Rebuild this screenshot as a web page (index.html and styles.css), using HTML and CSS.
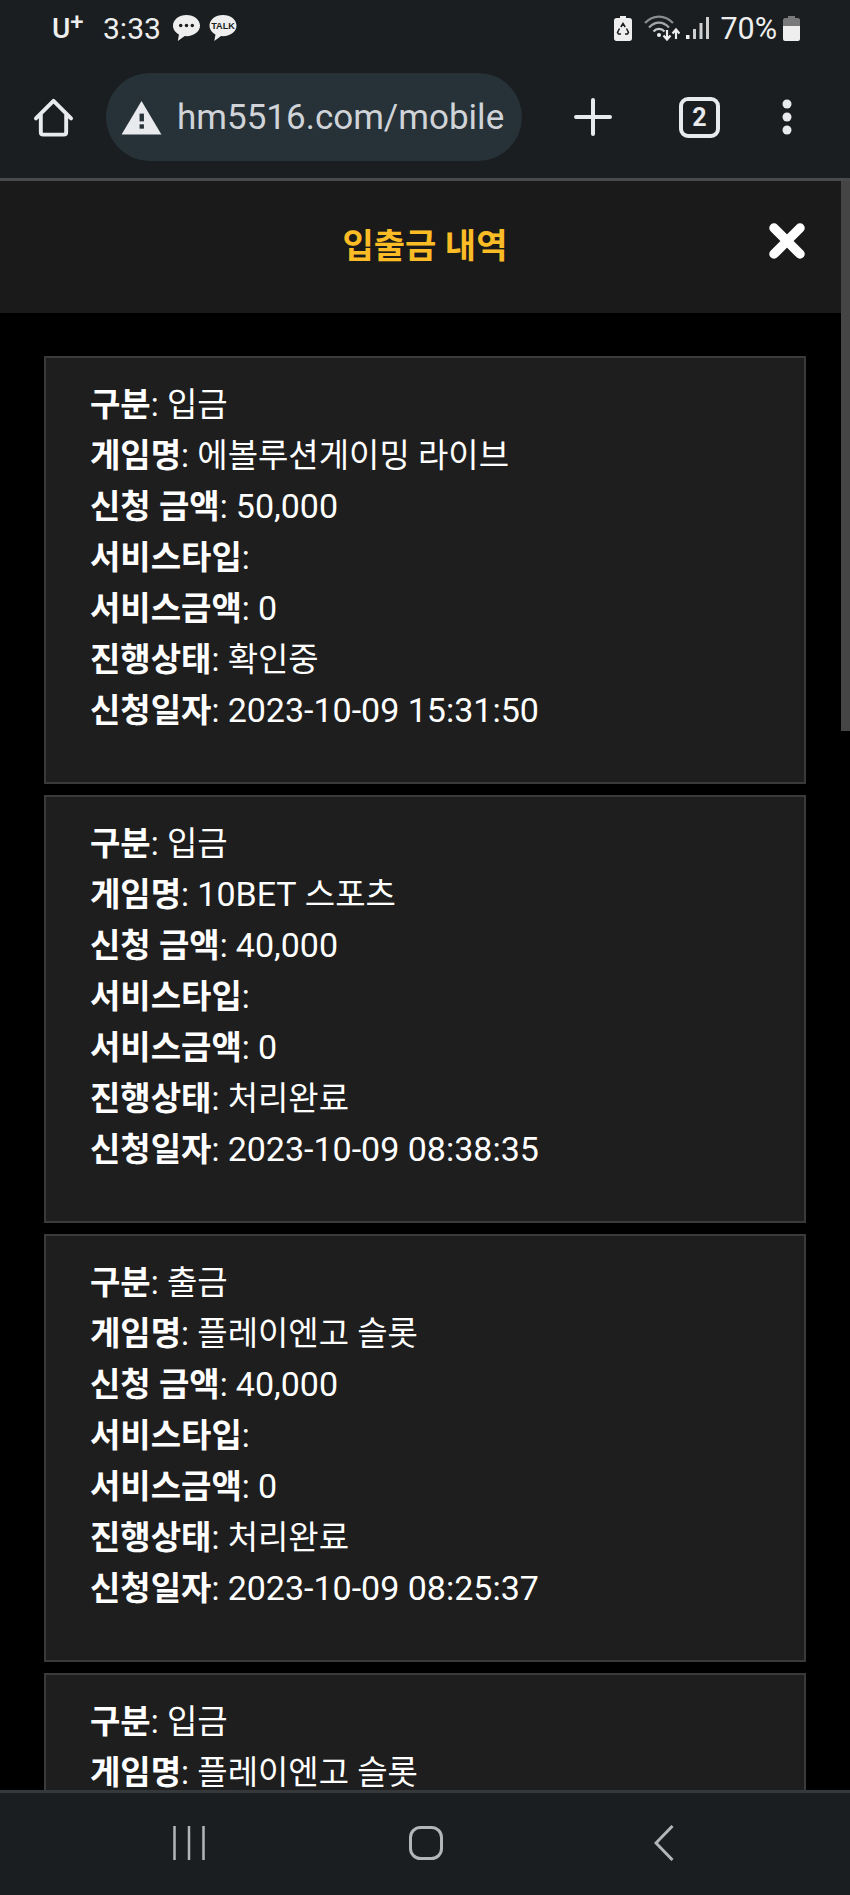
FILE: index.html
```html
<!DOCTYPE html>
<html lang="ko">
<head>
    <meta charset="UTF-8">
    <meta name="viewport" content="width=device-width, initial-scale=1.0">
    <title>입출금 내역</title>
    <link rel="stylesheet" href="styles.css">
</head>
<body>
    <header class="chrome">
        <div class="status">
            <div class="status-left">
                <span class="carrier">U<sup>+</sup></span>
                <span class="clock">3:33</span>
                <svg class="note" width="29" height="28" viewBox="0 0 30 29">
                    <path d="M15 1C7.300 1 1 5.900 1 12c0 4 2.400 7.300 6.200 9.200L6 28 13.200 22.900C13.800 23 14.400 23 15 23c7.700 0 14-4.900 14-11S22.700 1 15 1z" fill="#eeeeee"/>
                    <circle cx="9" cy="12" r="1.800" fill="#1a1e21"/>
                    <circle cx="15" cy="12" r="1.800" fill="#1a1e21"/>
                    <circle cx="21" cy="12" r="1.800" fill="#1a1e21"/>
                </svg>
                <svg class="note" width="30" height="28" viewBox="0 0 30 29">
                    <path d="M15 1C7 1 1 5.900 1 12c0 4 2.500 7.400 6.200 9.300L6 28 13 22.900C13.700 23 14.300 23 15 23c8 0 14-4.900 14-11S23 1 15 1z" fill="#eeeeee"/>
                    <text x="15" y="16" class="talk">TALK</text>
                </svg>
            </div>
            <div class="status-right">
                <svg width="18" height="25" viewBox="0 0 18 25">
                    <path d="M6 0h6v2h3.500C17 2 18 3 18 4.500v18c0 1.500-1 2.500-2.500 2.500h-13C1 25 0 24 0 22.500v-18C0 3 1 2 2.500 2H6z" fill="#eeeeee"/>
                    <path d="M6.800 11L9 7.500l2.200 3.500M12.500 12.500l2 4-1 1.500h-2.500M7 18H4.500l-1-1.500 2-4" fill="none" stroke="#1a1e21" stroke-width="1.500"/>
                </svg>
                <svg class="wifi" width="36" height="26" viewBox="0 0 36 26">
                    <path d="M1 8C9-.5 21-.5 29 8" fill="none" stroke="#8b8d8f" stroke-width="2.200"/>
                    <path d="M5 12.500C11 6 19 6 25 12.500" fill="none" stroke="#a5a7a8" stroke-width="2.200"/>
                    <path d="M9.500 16.500c3-3.500 8-3.500 11 0" fill="none" stroke="#c8c9ca" stroke-width="2.200"/>
                    <circle cx="15" cy="20" r="2" fill="#eeeeee"/>
                    <path d="M23 15v9M19.500 20.500l3.500 4 3.500-4" fill="none" stroke="#eeeeee" stroke-width="2.200"/>
                    <path d="M32 24v-9M28.500 18.500l3.500-4 3.500 4" fill="none" stroke="#eeeeee" stroke-width="2.200"/>
                </svg>
                <svg class="signal" width="23" height="24" viewBox="0 0 23 24">
                    <rect x="0" y="19" width="3.500" height="4" fill="#eeeeee"/>
                    <rect x="7" y="13" width="3" height="10" fill="#cfcfcf"/>
                    <rect x="13.500" y="7" width="3" height="16" fill="#cfcfcf"/>
                    <rect x="20" y="1" width="3" height="22" fill="#cfcfcf"/>
                </svg>
                <span class="percent">70%</span>
                <svg width="17" height="25" viewBox="0 0 17 25">
                    <path d="M5 0h7v2h3c1 0 2 1 2 2v3H0V4c0-1 1-2 2-2h3z" fill="#77797a"/>
                    <rect y="7" width="17" height="3" fill="#77797a"/>
                    <path d="M0 10h17v13c0 1-1 2-2 2H2c-1 0-2-1-2-2z" fill="#eeeeee"/>
                </svg>
            </div>
        </div>
        <div class="toolbar">
            <svg class="home" width="41" height="41" viewBox="0 0 42 42">
                <path d="M3 22L21 4l18 18M8 18v18c0 1.500 1 2.500 2.500 2.500h21c1.500 0 2.500-1 2.500-2.500V18" fill="none" stroke="#e8eaed" stroke-width="4" stroke-linejoin="round" stroke-linecap="round"/>
            </svg>
            <div class="omnibox">
                <svg width="41" height="35" viewBox="0 0 42 36">
                    <path d="M21 1L41.500 35.500H.5z" fill="#e8eaed"/>
                    <rect x="19" y="14" width="4.500" height="8" fill="#263238"/>
                    <rect x="19" y="25" width="4.500" height="4.500" fill="#263238"/>
                </svg>
                <span class="url">hm5516.com/mobile</span>
            </div>
            <svg class="plus" width="38" height="38" viewBox="0 0 38 38">
                <path d="M19 2v34M2 19h34" stroke="#e8eaed" stroke-width="4" stroke-linecap="round"/>
            </svg>
            <div class="tabs">2</div>
            <svg class="dots" width="14" height="38" viewBox="0 0 14 38">
                <circle cx="7" cy="6" r="4.500" fill="#e8eaed"/>
                <circle cx="7" cy="19" r="4.500" fill="#e8eaed"/>
                <circle cx="7" cy="32" r="4.500" fill="#e8eaed"/>
            </svg>
        </div>
    </header>

    <main class="viewport">
        <div class="modal-head">
            <h1>입출금 내역</h1>
            <svg class="close" width="38" height="38" viewBox="0 0 38 38">
                <path d="M6 6l13 13L32 6M6 32l13-13 13 13" fill="none" stroke="#ffffff" stroke-width="9.500" stroke-linecap="round" stroke-linejoin="round"/>
            </svg>
        </div>
        <div class="list">
            <section class="card">
                <p><b>구분</b>: 입금</p>
                <p><b>게임명</b>: 에볼루션게이밍 라이브</p>
                <p><b>신청 금액</b>: <span class="num">50,000</span></p>
                <p><b>서비스타입</b>:</p>
                <p><b>서비스금액</b>: <span class="num">0</span></p>
                <p><b>진행상태</b>: 확인중</p>
                <p><b>신청일자</b>: <span class="num">2023-10-09 15:31:50</span></p>
            </section>
            <section class="card">
                <p><b>구분</b>: 입금</p>
                <p><b>게임명</b>: <span class="num">10BET</span> 스포츠</p>
                <p><b>신청 금액</b>: <span class="num">40,000</span></p>
                <p><b>서비스타입</b>:</p>
                <p><b>서비스금액</b>: <span class="num">0</span></p>
                <p><b>진행상태</b>: 처리완료</p>
                <p><b>신청일자</b>: <span class="num">2023-10-09 08:38:35</span></p>
            </section>
            <section class="card">
                <p><b>구분</b>: 출금</p>
                <p><b>게임명</b>: 플레이엔고 슬롯</p>
                <p><b>신청 금액</b>: <span class="num">40,000</span></p>
                <p><b>서비스타입</b>:</p>
                <p><b>서비스금액</b>: <span class="num">0</span></p>
                <p><b>진행상태</b>: 처리완료</p>
                <p><b>신청일자</b>: <span class="num">2023-10-09 08:25:37</span></p>
            </section>
            <section class="card">
                <p><b>구분</b>: 입금</p>
                <p><b>게임명</b>: 플레이엔고 슬롯</p>
            </section>
        </div>
        <div class="scrollbar"></div>
    </main>

    <nav class="navbar">
        <svg class="nav-menu" width="32" height="34" viewBox="0 0 32 34">
            <path d="M1.500 0v34M16 0v34M30.500 0v34" stroke="#b4b5b6" stroke-width="2.500"/>
        </svg>
        <svg class="nav-home" width="34" height="34" viewBox="0 0 34 34">
            <rect x="1.500" y="1.500" width="31" height="31" rx="10" fill="none" stroke="#b4b5b6" stroke-width="3"/>
        </svg>
        <svg class="nav-back" width="20" height="36" viewBox="0 0 20 36">
            <path d="M18.500 1L2 18l16.500 17" fill="none" stroke="#b4b5b6" stroke-width="3"/>
        </svg>
    </nav>
</body>
</html>
```

FILE: styles.css
```css
* {
    box-sizing: border-box;
}
html, body {
    margin: 0;
    height: 100%;
}
body {
    font-family: Roboto, "Noto Sans CJK KR", sans-serif;
    display: flex;
    flex-direction: column;
    height: 1895px;
    overflow: hidden;
    background-color: #000;
    color: #fff;
}
svg {
    display: block;
    flex: none;
}

.chrome {
    height: 181px;
    flex: none;
    background-color: #1a1e21;
    border-bottom: 3px solid #484b4e;
}
.status {
    height: 60px;
    display: flex;
    justify-content: space-between;
    align-items: center;
    padding: 0 50px 4px 52px;
    color: #eeeeee;
}
.status-left, .status-right {
    display: flex;
    align-items: center;
}
.carrier {
    font-size: 28px;
    font-weight: 500;
    width: 51px;
}
.carrier sup {
    font-size: 24px;
    line-height: 0;
    vertical-align: 8px;
}
.clock {
    font-size: 30px;
    width: 69px;
}
.note {
    margin-right: 7px;
}
.talk {
    font-family: "Liberation Sans", sans-serif;
    font-size: 9.500px;
    font-weight: 700;
    text-anchor: middle;
    fill: #1a1e21;
}
.wifi {
    margin-left: 12px;
}
.signal {
    margin-left: 6px;
}
.percent {
    font-size: 30.500px;
    margin: 0 6px 0 11px;
}

.toolbar {
    height: 118px;
    display: flex;
    align-items: center;
    padding: 0 0 4px 33px;
    color: #e8eaed;
}
.omnibox {
    width: 416px;
    height: 88px;
    margin-left: 32px;
    padding: 0 12px 0 15px;
    display: flex;
    align-items: center;
    gap: 15px;
    background-color: #263238;
    border-radius: 44px;
    overflow: hidden;
}
.url {
    font-size: 35px;
    color: #d0d4d8;
    white-space: nowrap;
}
.plus {
    margin-left: 52px;
}
.tabs {
    width: 41px;
    height: 41px;
    margin-left: 67px;
    border: 4px solid #e8eaed;
    border-radius: 9px;
    display: flex;
    align-items: center;
    justify-content: center;
    font-size: 25px;
    font-weight: 700;
}
.dots {
    margin-left: 60px;
}

.viewport {
    flex: 1;
    min-height: 0;
    position: relative;
    overflow: hidden;
}
.modal-head {
    height: 132px;
    display: flex;
    align-items: center;
    justify-content: center;
    position: relative;
    background-color: #1a1a1a;
    padding-bottom: 8px;
}
.modal-head h1 {
    margin: 0;
    font-size: 34px;
    font-weight: 700;
    color: #fbbc25;
}
.close {
    position: absolute;
    right: 44px;
    top: 41px;
}
.list {
    padding: 43px 44px 0;
    display: flex;
    flex-direction: column;
    gap: 11px;
}
.card {
    height: 428px;
    flex: none;
    padding: 21px 44px;
    background-color: #1e1e1e;
    border: 2px solid #3a3a3a;
}
.card p {
    margin: 0;
    font-size: 33px;
    line-height: 51px;
    height: 51px;
    white-space: nowrap;
}
.num {
    font-size: 34px;
}
.scrollbar {
    position: absolute;
    top: 0;
    right: 0;
    width: 9px;
    height: 550px;
    background-color: #454545;
}

.navbar {
    height: 105px;
    flex: none;
    display: flex;
    align-items: center;
    padding: 0 0 3px 173px;
    background-color: #1a1e21;
    border-top: 3px solid #36393c;
}
.nav-home {
    margin-left: 204px;
}
.nav-back {
    margin-left: 211px;
}
```
